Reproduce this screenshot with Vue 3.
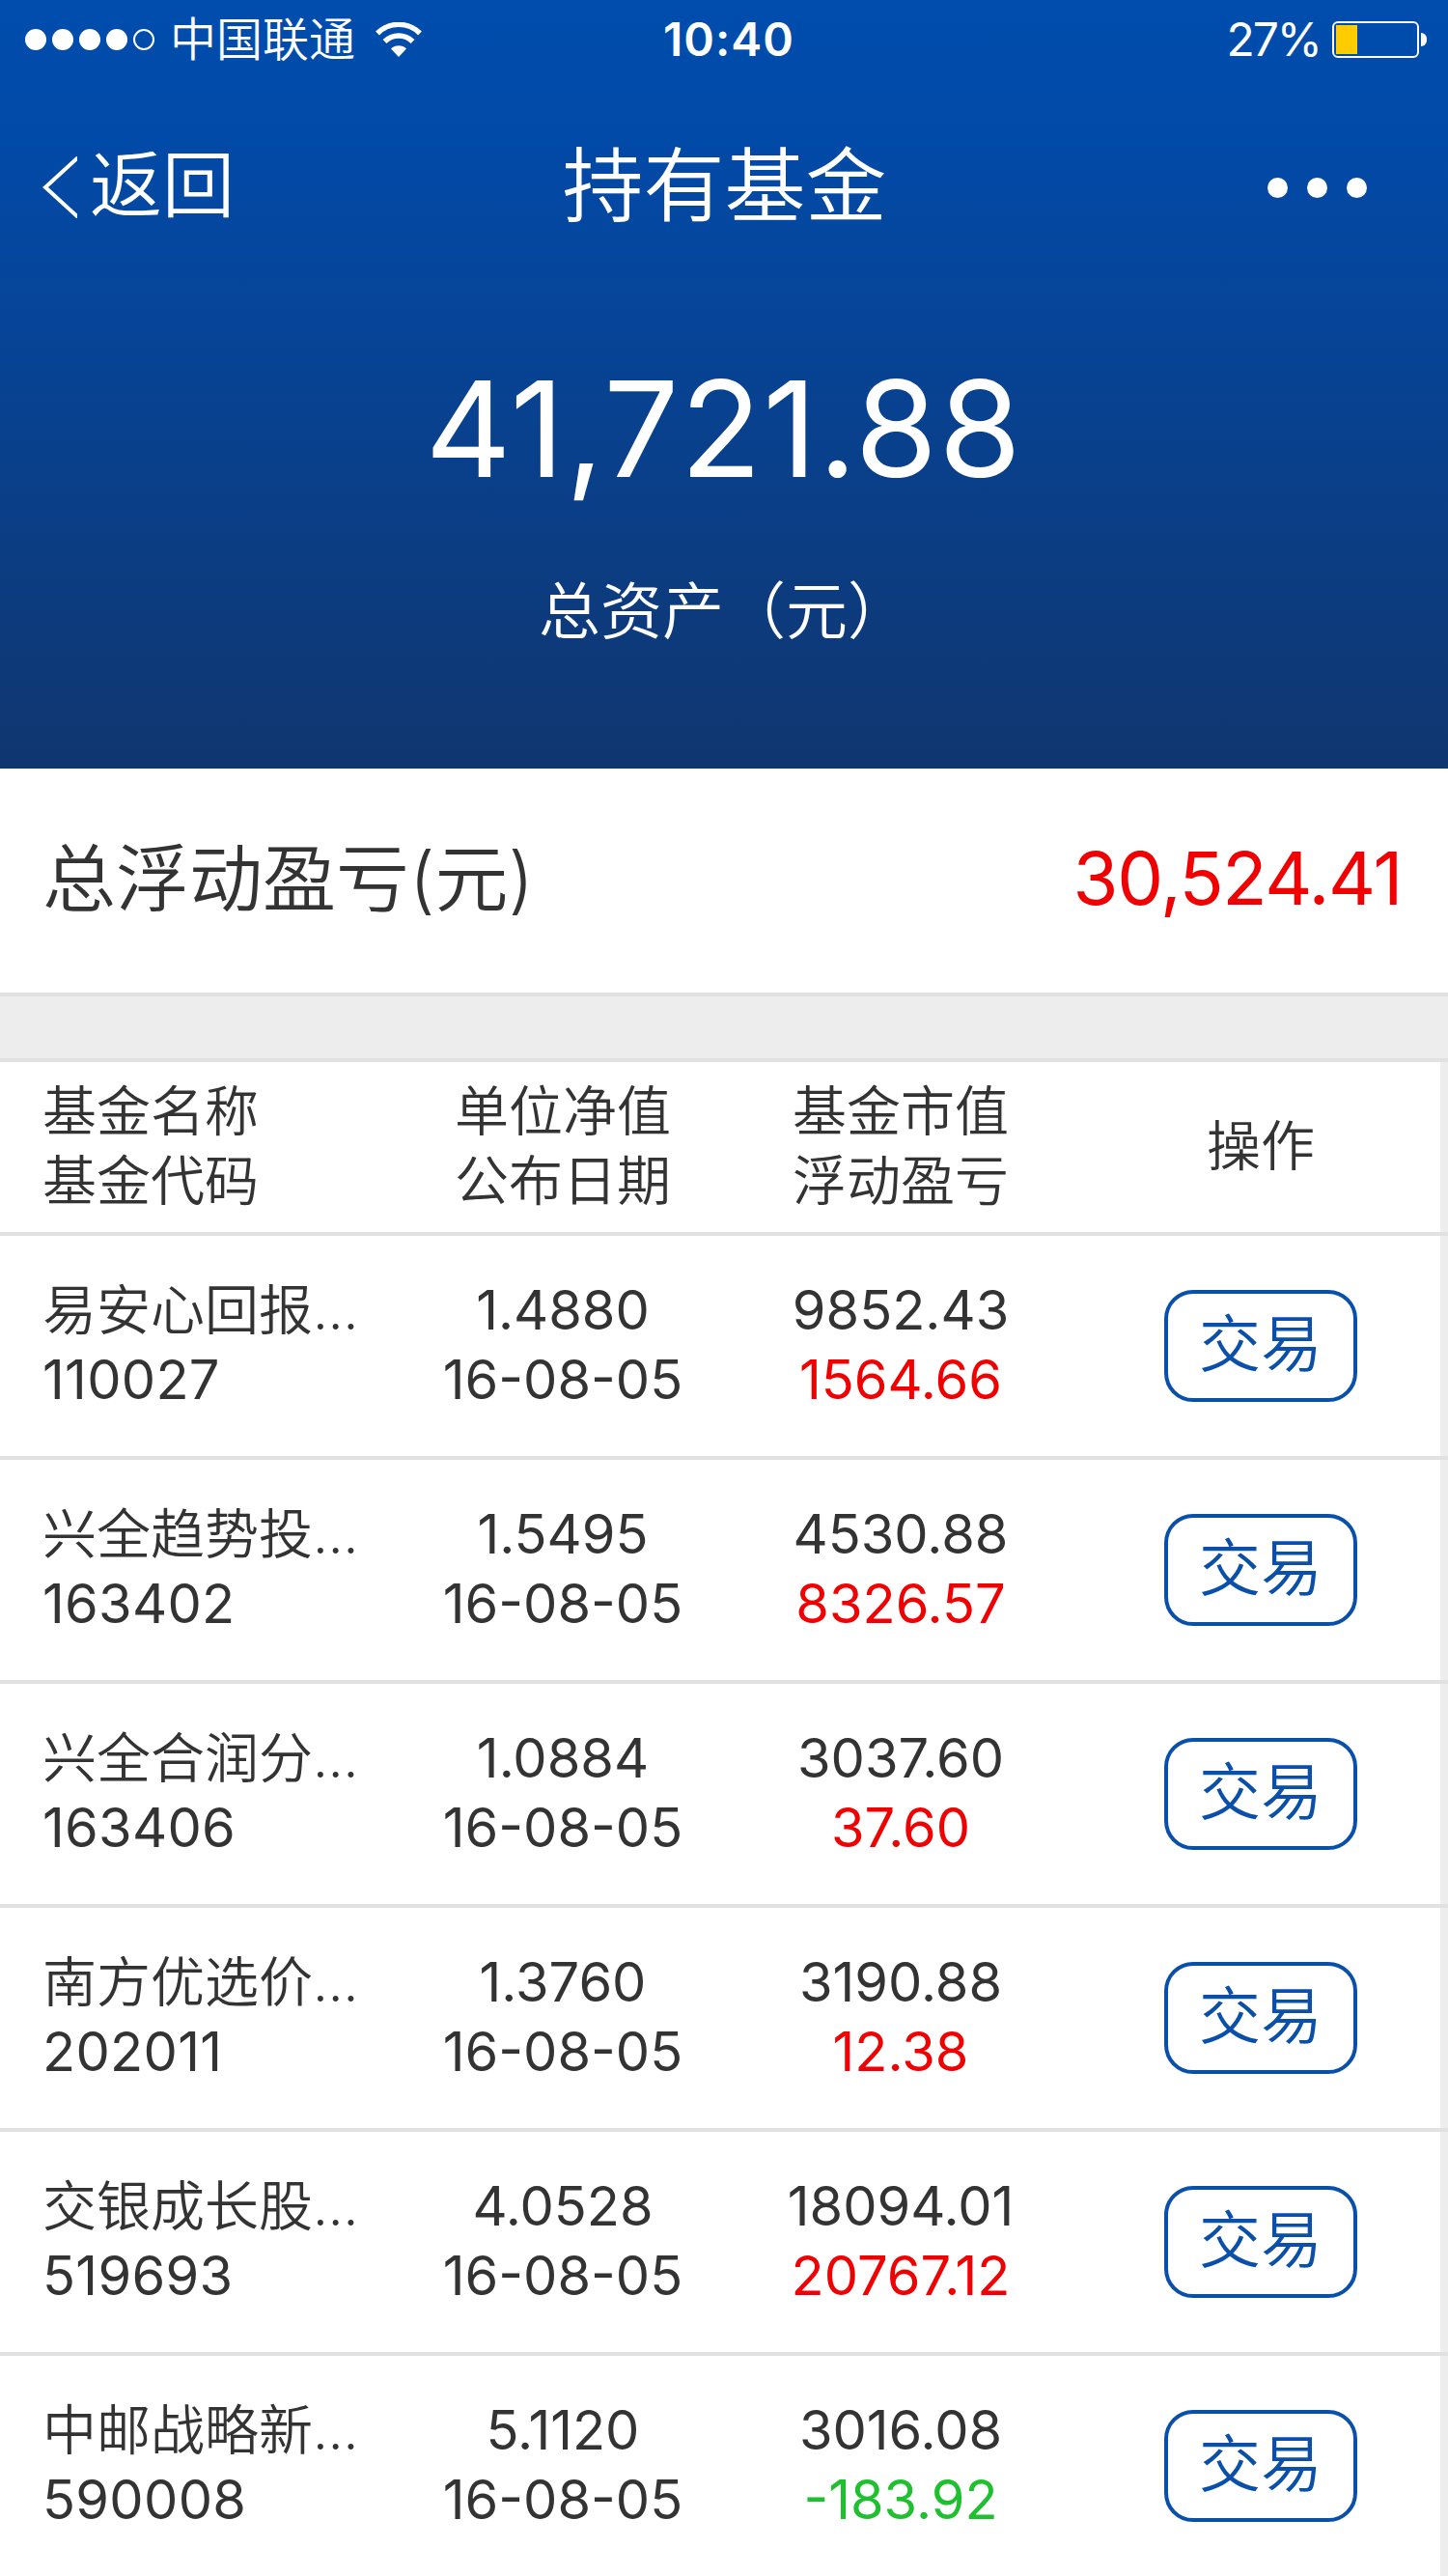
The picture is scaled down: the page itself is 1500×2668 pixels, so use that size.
<template>
  <div class="page">
    <header class="hero">
      <!-- 状态栏 -->
      <div class="status-bar">
        <div class="status-left">
          <div class="signal">
            <i v-for="n in 5" :key="n" :class="{ empty: n > signal }"></i>
          </div>
          <span class="carrier">中国联通</span>
          <svg class="wifi" viewBox="0 0 48 36">
            <path d="M2 11.5 A31 31 0 0 1 46 11.5" fill="none" stroke="#fff" stroke-width="5.4" />
            <path d="M9.5 20 A20.5 20.5 0 0 1 38.5 20" fill="none" stroke="#fff" stroke-width="5.4" />
            <path d="M16 27.5 A11.5 11.5 0 0 1 32 27.5 L24 36 Z" fill="#fff" />
          </svg>
        </div>
        <span class="time">10:40</span>
        <div class="status-right">
          <span class="percent">{{ battery }}%</span>
          <div class="battery">
            <div class="battery-level" :style="{ width: battery + '%' }"></div>
          </div>
          <i class="battery-tip"></i>
        </div>
      </div>

      <!-- 导航栏 -->
      <nav class="nav-bar">
        <a class="back">
          <svg class="chevron" viewBox="0 0 36 64">
            <path d="M38 0 L3 32 L38 64" fill="none" stroke="#fff" stroke-width="4" />
          </svg>
          <span class="back-text">返回</span>
        </a>
        <h1 class="title">持有基金</h1>
        <div class="more"><i></i><i></i><i></i></div>
      </nav>

      <div class="total">41,721.88</div>
      <div class="total-label">总资产（元）</div>
    </header>

    <!-- 总盈亏 -->
    <section class="summary">
      <span class="summary-label">总浮动盈亏(元)</span>
      <span class="summary-value">30,524.41</span>
    </section>

    <div class="spacer"></div>

    <!-- 持仓列表 -->
    <section class="table">
      <div class="row head">
        <div class="cell name">基金名称<br />基金代码</div>
        <div class="cell">单位净值<br />公布日期</div>
        <div class="cell">基金市值<br />浮动盈亏</div>
        <div class="cell">操作</div>
      </div>
      <div v-for="fund in funds" :key="fund.code" class="row">
        <div class="cell name">
          <div>{{ fund.name }}</div>
          <div class="num code">{{ fund.code }}</div>
        </div>
        <div class="cell num">
          <div>{{ fund.nav }}</div>
          <div>{{ fund.date }}</div>
        </div>
        <div class="cell num">
          <div>{{ fund.value }}</div>
          <div :class="fund.profit.startsWith('-') ? 'down' : 'up'">{{ fund.profit }}</div>
        </div>
        <div class="cell action">
          <button class="trade">交易</button>
        </div>
      </div>
    </section>
  </div>
</template>

<script setup>
const signal = 4
const battery = 27

const funds = [
  { name: '易安心回报...', code: '110027', nav: '1.4880', date: '16-08-05', value: '9852.43', profit: '1564.66' },
  { name: '兴全趋势投...', code: '163402', nav: '1.5495', date: '16-08-05', value: '4530.88', profit: '8326.57' },
  { name: '兴全合润分...', code: '163406', nav: '1.0884', date: '16-08-05', value: '3037.60', profit: '37.60' },
  { name: '南方优选价...', code: '202011', nav: '1.3760', date: '16-08-05', value: '3190.88', profit: '12.38' },
  { name: '交银成长股...', code: '519693', nav: '4.0528', date: '16-08-05', value: '18094.01', profit: '20767.12' },
  { name: '中邮战略新...', code: '590008', nav: '5.1120', date: '16-08-05', value: '3016.08', profit: '-183.92' }
]
</script>

<style>
body {
  margin: 0;
  background: #fff;
}
</style>

<style scoped>
.page {
  width: 1500px;
  height: 2668px;
  overflow: hidden;
  font-family: Inter, "Noto Sans CJK SC", sans-serif;
  font-weight: 350;
  color: #333;
}

.hero {
  height: 796px;
  background: linear-gradient(180deg, #004dad 0%, #024aa8 18%, #10366f 100%);
  color: #fff;
  text-align: center;
}

/* 状态栏 */
.status-bar {
  display: grid;
  grid-template-columns: 1fr auto 1fr;
  align-items: center;
  height: 82px;
  padding: 0 22px 0 26px;
  font-size: 48px;
  line-height: 82px;
}

.status-left,
.status-right {
  display: flex;
  align-items: center;
}

.status-right {
  justify-content: flex-end;
}

.signal {
  display: flex;
  gap: 6px;
}

.signal i {
  box-sizing: border-box;
  width: 22px;
  height: 22px;
  border-radius: 50%;
  background: #fff;
}

.signal i.empty {
  background: none;
  border: 2px solid #fff;
}

.carrier {
  margin-left: 16px;
}

.wifi {
  width: 48px;
  height: 36px;
  margin-left: 21px;
}

.time {
  padding-left: 6px;
  font-weight: 600;
  letter-spacing: 1px;
}

.percent {
  margin-right: 12px;
  font-weight: 400;
  letter-spacing: -2px;
}

.battery {
  box-sizing: border-box;
  width: 90px;
  height: 38px;
  padding: 2px;
  border: 2px solid #fff;
  border-radius: 6px;
}

.battery-level {
  height: 100%;
  background: #fc0;
}

.battery-tip {
  width: 6px;
  height: 14px;
  margin-left: 2px;
  border-radius: 0 6px 6px 0;
  background: #fff;
}

/* 导航栏 */
.nav-bar {
  display: grid;
  grid-template-columns: 1fr auto 1fr;
  align-items: center;
  height: 224px;
  padding: 0 84px 0 44px;
}

.back {
  display: flex;
  align-items: center;
  font-size: 75px;
}

.back-text {
  padding-bottom: 15px;
}

.chevron {
  width: 36px;
  height: 64px;
  margin-right: 13px;
}

.title {
  margin: 0;
  padding: 0 0 15px 41px;
  font-size: 84px;
  font-weight: inherit;
}

.more {
  display: flex;
  justify-content: flex-end;
  gap: 20px;
}

.more i {
  width: 21px;
  height: 21px;
  border-radius: 50%;
  background: #fff;
}

.total {
  margin-top: 54px;
  font-size: 138px;
  line-height: 168px;
  font-weight: 400;
  letter-spacing: 1.4px;
}

.total-label {
  margin-top: 60px;
  font-size: 64px;
  line-height: 90px;
}

/* 总盈亏 */
.summary {
  display: flex;
  align-items: center;
  justify-content: space-between;
  height: 232px;
  padding: 0 48px 0 44px;
}

.summary-label {
  padding-bottom: 14px;
  font-size: 76px;
}

.summary-value {
  padding-bottom: 7px;
  font-size: 76px;
  font-weight: 400;
  letter-spacing: -1.3px;
  color: #f00000;
}

.spacer {
  height: 64px;
  border-top: 4px solid #e1e1e1;
  border-bottom: 4px solid #e1e1e1;
  background: #ededed;
}

/* 列表 */
.table {
  font-size: 56px;
  line-height: 72px;
}

.row {
  display: grid;
  grid-template-columns: 364px 350px 350px 396px;
  align-items: center;
  height: 228px;
  padding-left: 44px;
  border-bottom: 4px solid #e1e1e1;
  background: linear-gradient(#ededed, #ededed) right / 8px 100% no-repeat;
}

.row.head {
  height: 176px;
}

.cell {
  padding-bottom: 3px;
  text-align: center;
}

.cell.name {
  text-align: left;
}

.cell.action {
  padding-bottom: 0;
}

.num {
  font-weight: 400;
}

.code {
  letter-spacing: 0.3px;
}

.up {
  color: #f00000;
}

.down {
  color: #1fc02f;
}

.trade {
  display: block;
  box-sizing: border-box;
  width: 200px;
  height: 116px;
  margin: 0 auto;
  padding: 0 0 4px;
  border: 4px solid #0a50ab;
  border-radius: 30px;
  background: #fff;
  color: #0a50ab;
  font-family: inherit;
  font-size: 64px;
  font-weight: inherit;
  line-height: 100px;
}
</style>
